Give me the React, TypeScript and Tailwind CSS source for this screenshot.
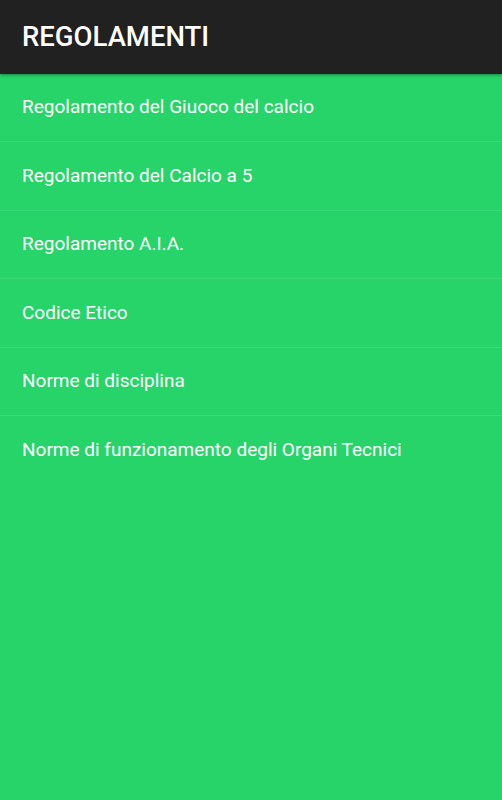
const items = [
  "Regolamento del Giuoco del calcio",
  "Regolamento del Calcio a 5",
  "Regolamento A.I.A.",
  "Codice Etico",
  "Norme di disciplina",
  "Norme di funzionamento degli Organi Tecnici",
];

export default function App() {
  return (
    <div className="min-h-[800px] h-[800px] flex flex-col bg-[#27d469] font-['Roboto',sans-serif]">
      <header className="h-[74px] shrink-0 bg-[#212121] flex items-center px-[22px] shadow-[0_1px_3px_rgba(0,0,0,0.4)] relative z-10">
        <h1 className="text-white text-[27.5px] font-medium">REGOLAMENTI</h1>
      </header>
      <ul className="flex flex-col">
        {items.map((item, i) => (
          <li
            key={item}
            className={`h-[68.4px] flex items-center px-[22px] text-white text-[19px] ${
              i < items.length - 1 ? "border-b border-[#3cd97b]" : ""
            }`}
          >
            {item}
          </li>
        ))}
      </ul>
    </div>
  );
}
